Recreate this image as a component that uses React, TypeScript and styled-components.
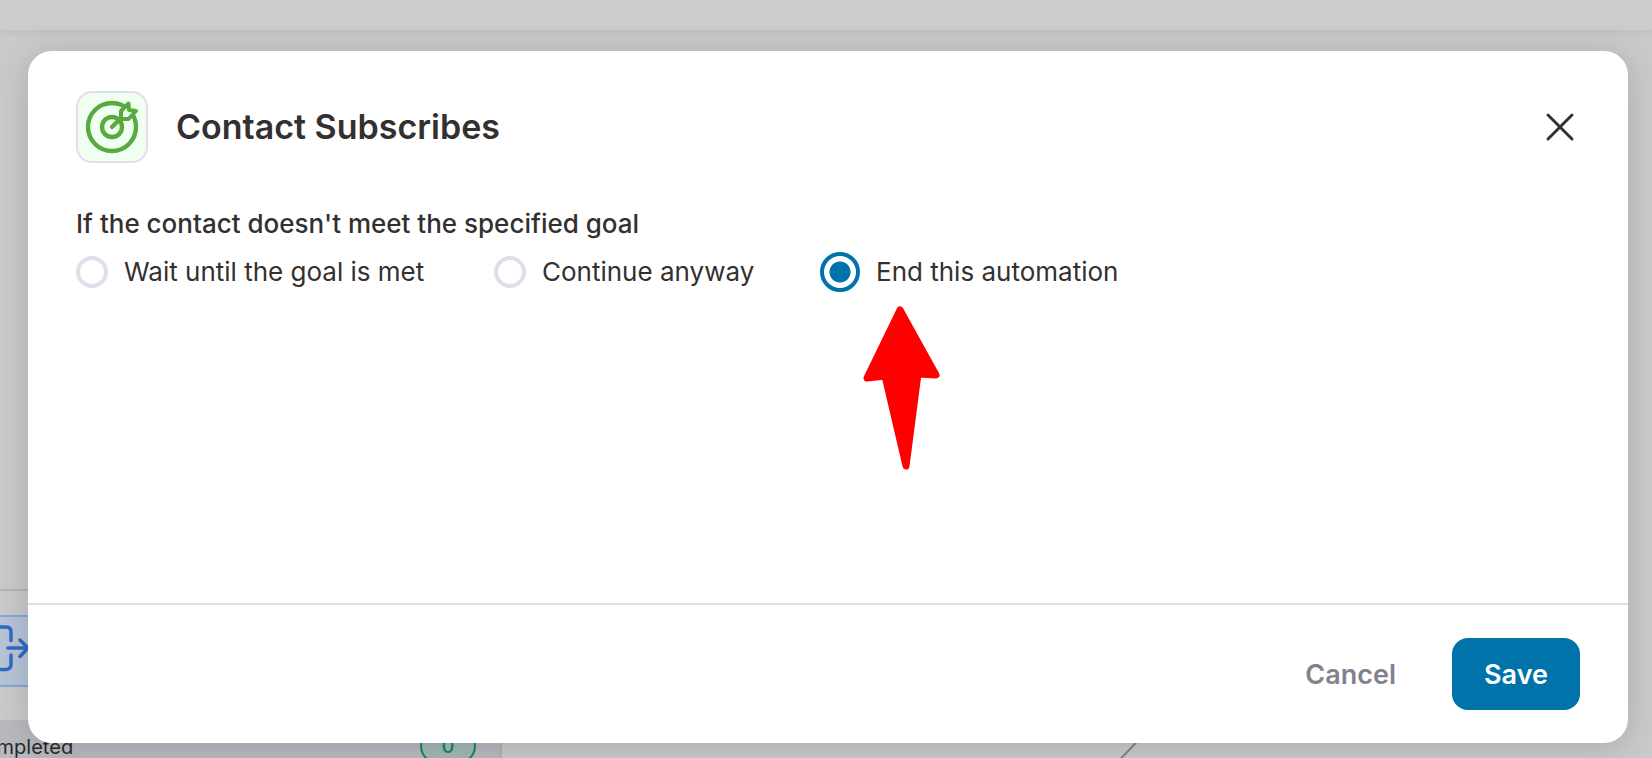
import React, { useState } from "react";
import styled, { createGlobalStyle, css } from "styled-components";

const GlobalStyle = createGlobalStyle`
  *, *::before, *::after { box-sizing: border-box; }
  body {
    margin: 0;
    background: #cacaca;
    color: #353030;
    font-family: Inter, "Liberation Sans", sans-serif;
    -webkit-font-smoothing: antialiased;
  }
  button, input { font: inherit; color: inherit; }
`;

const Page = styled.div`
  position: relative;
  display: flex;
  flex-direction: column;
  height: 100vh;
  overflow: hidden;
`;

const TopBar = styled.header`
  flex: none;
  height: 30px;
  background: #cccccc;
  box-shadow: 0 2px 8px rgba(0, 0, 0, 0.08);
`;

const Canvas = styled.div`
  position: relative;
  flex: 1;
  overflow: hidden;
`;

const NodeCard = styled.section`
  position: absolute;
  top: 559px;
  left: -120px;
  width: 622px;
  border: 2px solid #b2b2bc;
`;

const NodeBody = styled.div`
  display: flex;
  height: 129px;
  padding: 24px 72px;
`;

const NodeIcon = styled.div`
  display: flex;
  justify-content: flex-end;
  width: 82px;
  height: 72px;
  padding-top: 8px;
  border: 2px solid #86a8d8;
  border-radius: 4px;
  background: #b7c4d5;
`;

const NodeStats = styled.div`
  display: flex;
  justify-content: space-between;
  padding: 8px 24px 8px 88px;
  background: #b9b9c0;
  color: #2b2828;
  font-size: 20px;
  line-height: 38px;
`;

const StatPill = styled.span`
  width: 56px;
  height: 36px;
  border: 2px solid #10866f;
  border-radius: 18px;
  background: #a4b8b4;
  color: #10866f;
  font-weight: 500;
  line-height: 32px;
  text-align: center;
`;

const Connector = styled.svg`
  position: absolute;
  top: 703px;
  left: 1110px;
`;

const Overlay = styled.div`
  position: absolute;
  inset: 0;
  display: flex;
  padding: 51px 24px 15px 28px;
`;

const Dialog = styled.form`
  display: flex;
  flex: 1;
  flex-direction: column;
  border-radius: 24px;
  background: #ffffff;
  box-shadow: 0 4px 32px rgba(0, 0, 0, 0.16);
`;

const DialogHeader = styled.header`
  display: flex;
  align-items: center;
  gap: 28px;
  padding: 40px 48px 0;
`;

const GoalBadge = styled.span`
  display: flex;
  flex: none;
  width: 72px;
  height: 72px;
  border: 2px solid #dfdeeb;
  border-radius: 16px;
  background: #f0fff0;
`;

const Title = styled.h1`
  flex: 1;
  margin: 0;
  font-size: 34px;
  font-weight: 600;
  line-height: 48px;
`;

const IconButton = styled.button`
  display: flex;
  padding: 4px;
  border: 0;
  background: none;
  cursor: pointer;
`;

const DialogBody = styled.div`
  flex: 1;
  padding: 44px 48px 0;
`;

const Options = styled.fieldset`
  margin: 0;
  padding: 0;
  border: 0;
`;

const Legend = styled.legend`
  padding: 0;
  font-size: 26px;
  font-weight: 500;
  line-height: 34px;
`;

const OptionRow = styled.div`
  display: grid;
  grid-template-columns: 418px 326px auto;
  justify-content: start;
  margin-top: 11px;
`;

const Option = styled.label`
  position: relative;
  display: flex;
  align-items: center;
  gap: 16px;
  height: 40px;
  font-size: 26px;
  line-height: 42px;
  white-space: nowrap;
  cursor: pointer;
`;

const Radio = styled.input`
  appearance: none;
  width: 32px;
  height: 32px;
  margin: 0;
  border: 4px solid #dfdeeb;
  border-radius: 50%;
  background: #ffffff;
  cursor: pointer;

  &:checked {
    width: 40px;
    height: 40px;
    border-color: #0073aa;
    background: radial-gradient(circle, #0073aa 10px, #ffffff 11px);
  }
`;

const Pointer = styled.svg`
  position: absolute;
  top: 52px;
  left: 40px;
  pointer-events: none;
`;

const DialogFooter = styled.footer`
  display: flex;
  justify-content: flex-end;
  gap: 24px;
  padding: 33px 48px;
  border-top: 2px solid #dfdeeb;
`;

const Button = styled.button<{ $primary?: boolean }>`
  height: 72px;
  padding: 0 32px;
  border: 0;
  border-radius: 16px;
  background: none;
  color: #83818f;
  font-size: 27px;
  font-weight: 600;
  cursor: pointer;

  ${({ $primary }) =>
    $primary &&
    css`
      min-width: 128px;
      padding: 0 24px;
      background: #0073aa;
      color: #ffffff;
    `}
`;

const choices = ["Wait until the goal is met", "Continue anyway", "End this automation"];

const TargetIcon = () => (
  <svg width="68" height="68" viewBox="0 0 68 68" fill="none" stroke="#56aa40" strokeWidth="4.4" strokeLinecap="round" strokeLinejoin="round" aria-hidden="true">
    <circle cx="34" cy="34" r="24" />
    <circle cx="34" cy="34" r="10" />
    <path d="M34 34 43 25" />
    <path d="M43 26v-8l7.500-7.500.5 6.500 7 1-7.500 8z" fill="#f0fff0" strokeWidth="4" />
  </svg>
);

const ExitIcon = () => (
  <svg width="44" height="48" viewBox="0 0 44 48" fill="none" stroke="#3069c6" strokeWidth="3.5" strokeLinecap="round" strokeLinejoin="round" aria-hidden="true">
    <path d="M21 15.500V7q0-5-5-5H2M21 30v9q0 5.500-5 5.500H2M18 23h20M30 15l8 8-8 8.500" />
  </svg>
);

export default function App() {
  const [choice, setChoice] = useState(choices[2]);

  return (
    <>
      <GlobalStyle />
      <Page>
        <TopBar />
        <Canvas>
          <NodeCard>
            <NodeBody>
              <NodeIcon>
                <ExitIcon />
              </NodeIcon>
            </NodeBody>
            <NodeStats>
              <span>Completed</span>
              <StatPill>0</StatPill>
            </NodeStats>
          </NodeCard>
          <Connector width="40" height="32" fill="none" stroke="#858585" strokeWidth="2" aria-hidden="true">
            <path d="M5 31 Q18 19 30 5" />
          </Connector>
        </Canvas>
        <Overlay>
          <Dialog role="dialog" aria-labelledby="dialog-title" onSubmit={(e) => e.preventDefault()}>
            <DialogHeader>
              <GoalBadge>
                <TargetIcon />
              </GoalBadge>
              <Title id="dialog-title">Contact Subscribes</Title>
              <IconButton type="button" aria-label="Close">
                <svg width="32" height="32" viewBox="0 0 32 32" stroke="#353030" strokeWidth="3" strokeLinecap="round" aria-hidden="true">
                  <path d="M4 4 28 28M28 4 4 28" />
                </svg>
              </IconButton>
            </DialogHeader>
            <DialogBody>
              <Options>
                <Legend>If the contact doesn't meet the specified goal</Legend>
                <OptionRow>
                  {choices.map((text) => (
                    <Option key={text}>
                      <Radio type="radio" name="unmet-goal" checked={choice === text} onChange={() => setChoice(text)} />
                      {text}
                      {text === "End this automation" && (
                        <Pointer width="84" height="170" viewBox="0 0 84 170" fill="#ff0000" stroke="#ff0000" strokeWidth="7" strokeLinejoin="round" aria-hidden="true">
                          <path d="M40 6 76 71 58 70 46 162 25 72 7 74z" />
                        </Pointer>
                      )}
                    </Option>
                  ))}
                </OptionRow>
              </Options>
            </DialogBody>
            <DialogFooter>
              <Button type="button">Cancel</Button>
              <Button type="submit" $primary>
                Save
              </Button>
            </DialogFooter>
          </Dialog>
        </Overlay>
      </Page>
    </>
  );
}
